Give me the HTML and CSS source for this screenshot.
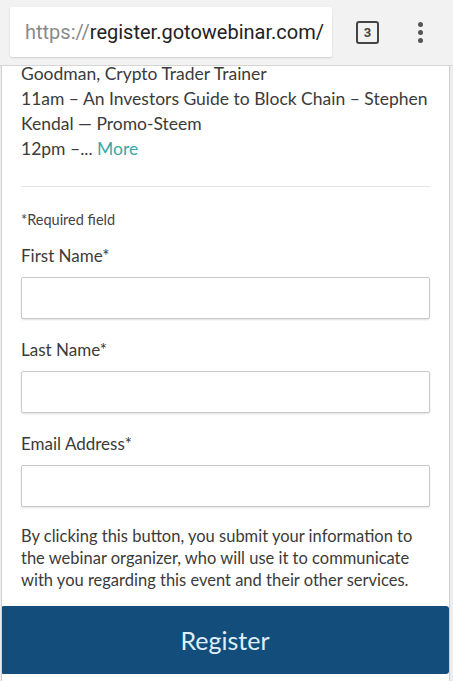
FILE: index.html
```html
<!DOCTYPE html>
<html lang="en">
<head>
    <meta charset="UTF-8">
    <meta name="viewport" content="width=device-width, initial-scale=1.0">
    <title>Register - GoToWebinar</title>
    <link rel="stylesheet" href="styles.css">
</head>
<body>
    <div class="chrome">
        <div class="url-box">
            <span class="scheme">https://</span><span class="host">register.gotowebinar.com/</span>
        </div>
        <div class="tabs">3</div>
        <div class="menu">
            <span></span><span></span><span></span>
        </div>
    </div>
    <div class="page">
        <div class="agenda">
            <p>Goodman, Crypto Trader Trainer</p>
            <p>11am – An Investors Guide to Block Chain – Stephen Kendal — Promo-Steem</p>
            <p>12pm –... <a href="#" class="more">More</a></p>
        </div>
        <form class="reg-form">
            <p class="required">*Required field</p>
            <label class="field">
                <span>First Name*</span>
                <input type="text">
            </label>
            <label class="field">
                <span>Last Name*</span>
                <input type="text">
            </label>
            <label class="field">
                <span>Email Address*</span>
                <input type="email">
            </label>
            <p class="disclaimer">By clicking this button, you submit your information to the webinar organizer, who will use it to communicate with you regarding this event and their other services.</p>
        </form>
        <button class="register" type="button">Register</button>
    </div>
</body>
</html>
```

FILE: styles.css
```css
* { margin: 0; padding: 0; box-sizing: border-box; }
body {
    font-family: Lato, 'Open Sans', sans-serif;
    background: #ededed;
    color: #3b3b3b;
    width: 453px;
    height: 681px;
    overflow: hidden;
}
.chrome {
    height: 66px;
    background: #f2f2f2;
    border-bottom: 1px solid #d6d6d6;
    display: flex;
    align-items: center;
    padding: 0 0 0 10px;
}
.url-box {
    width: 322px;
    height: 50px;
    background: #fff;
    border-radius: 2px;
    box-shadow: 0 1px 2px rgba(0, 0, 0, 0.15);
    display: flex;
    align-items: center;
    padding-left: 15px;
    font-family: Roboto, sans-serif;
    font-size: 20px;
    margin-top: -1px;
    white-space: nowrap;
}
.scheme { color: #8a8a8a; }
.host { color: #222; }
.tabs {
    margin-left: 24px;
    width: 23px;
    height: 23px;
    border: 2.5px solid #444;
    border-radius: 3px;
    font-family: Roboto, sans-serif;
    font-size: 13px;
    font-weight: 700;
    color: #444;
    display: flex;
    align-items: center;
    justify-content: center;
}
.menu {
    margin-left: 39px;
    display: flex;
    flex-direction: column;
    gap: 3px;
}
.menu span {
    width: 5px;
    height: 5px;
    border-radius: 50%;
    background: #555;
}
.page {
    background: #fff;
    width: 449px;
    height: 615px;
    border-left: 1px solid #d0d0d0;
    border-right: 1px solid #d0d0d0;
    margin-left: 1px;
    overflow: hidden;
}
.agenda {
    margin: -5px 19px 0 19px;
    padding-bottom: 25px;
    border-bottom: 1px solid #e6e6e6;
    font-size: 17.5px;
    line-height: 25px;
}
.more { color: #3aa7a6; text-decoration: none; }
.reg-form { padding: 23px 19px 0 19px; }
.required { font-size: 14.5px; color: #444; line-height: 20px; }
.field {
    display: flex;
    flex-direction: column;
    margin-top: 15px;
    font-size: 17px;
    line-height: 22px;
}
.field + .field { margin-top: 20px; }
.field input {
    margin-top: 10px;
    height: 42px;
    border: 1px solid #c9c9c9;
    border-radius: 2px;
    box-shadow: 0 1px 2px rgba(0, 0, 0, 0.12);
    background: #fff;
}
.disclaimer {
    margin-top: 18px;
    font-size: 16.5px;
    line-height: 22px;
    color: #3b3b3b;
}
.register {
    display: block;
    width: 448px;
    height: 68px;
    margin: 15px 0 0 -1px;
    border: none;
    border-radius: 3px;
    background: #134d7b;
    color: #dfeefa;
    font-family: Lato, sans-serif;
    font-size: 25px;
}
```
